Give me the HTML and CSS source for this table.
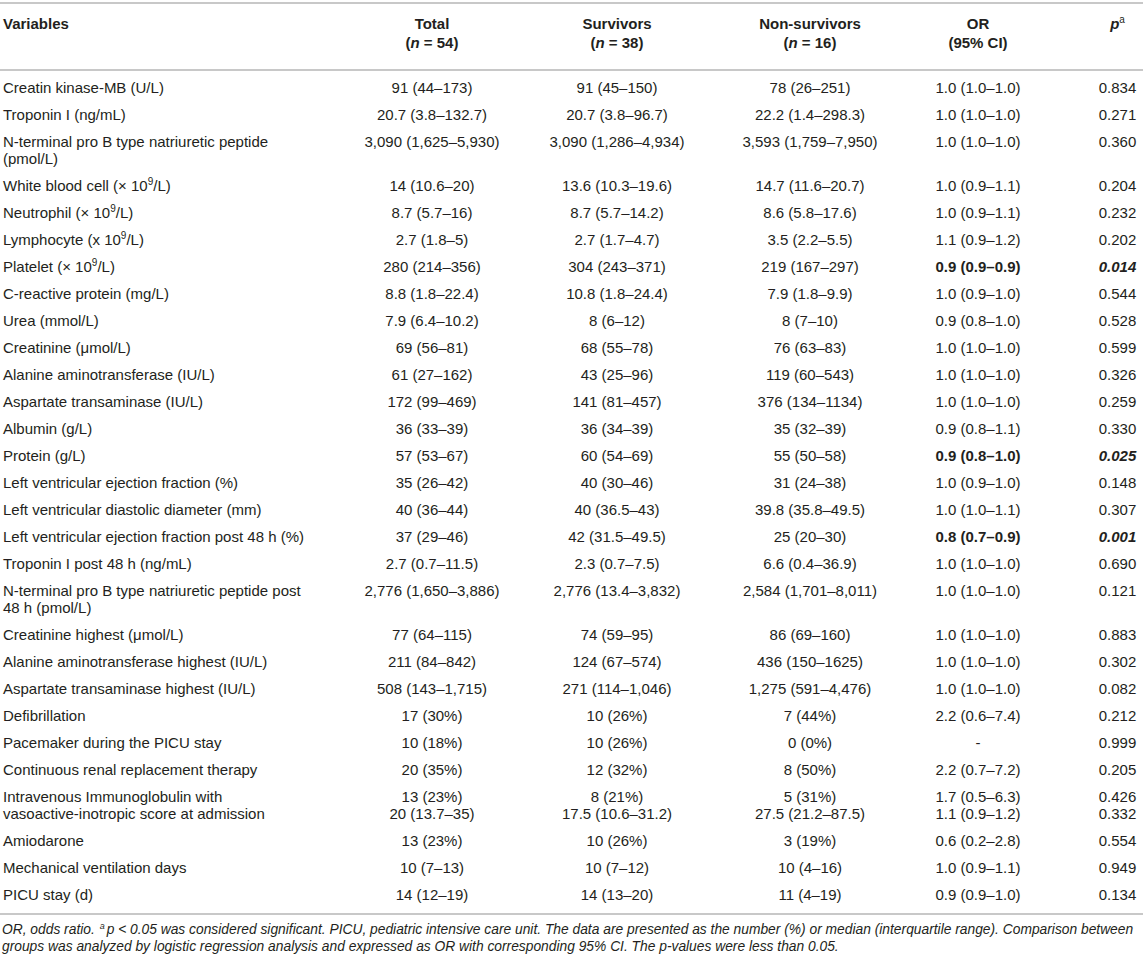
FILE: index.html
```html
<!DOCTYPE html>
<html lang="en">
<head>
    <meta charset="UTF-8">
    <meta name="viewport" content="width=device-width, initial-scale=1.0">
    <title>Laboratory and treatment variables</title>
    <link rel="stylesheet" href="styles.css">
</head>
<body>
<div class="table-wrap">
    <table class="data-table">
        <colgroup>
            <col class="col-var">
            <col class="col-total">
            <col class="col-surv">
            <col class="col-non">
            <col class="col-or">
            <col class="col-p">
        </colgroup>
        <thead>
            <tr>
                <th class="var">Variables</th>
                <th>Total<br>(<i>n</i> = 54)</th>
                <th>Survivors<br>(<i>n</i> = 38)</th>
                <th>Non-survivors<br>(<i>n</i> = 16)</th>
                <th>OR<br>(95% CI)</th>
                <th class="p"><i>p</i><sup>a</sup></th>
            </tr>
        </thead>
        <tbody>
            <tr><td class="var">Creatin kinase-MB (U/L)</td><td>91 (44–173)</td><td>91 (45–150)</td><td>78 (26–251)</td><td>1.0 (1.0–1.0)</td><td class="p">0.834</td></tr>
            <tr><td class="var">Troponin I (ng/mL)</td><td>20.7 (3.8–132.7)</td><td>20.7 (3.8–96.7)</td><td>22.2 (1.4–298.3)</td><td>1.0 (1.0–1.0)</td><td class="p">0.271</td></tr>
            <tr><td class="var">N-terminal pro B type natriuretic peptide (pmol/L)</td><td>3,090 (1,625–5,930)</td><td>3,090 (1,286–4,934)</td><td>3,593 (1,759–7,950)</td><td>1.0 (1.0–1.0)</td><td class="p">0.360</td></tr>
            <tr><td class="var">White blood cell (× 10<sup>9</sup>/L)</td><td>14 (10.6–20)</td><td>13.6 (10.3–19.6)</td><td>14.7 (11.6–20.7)</td><td>1.0 (0.9–1.1)</td><td class="p">0.204</td></tr>
            <tr><td class="var">Neutrophil (× 10<sup>9</sup>/L)</td><td>8.7 (5.7–16)</td><td>8.7 (5.7–14.2)</td><td>8.6 (5.8–17.6)</td><td>1.0 (0.9–1.1)</td><td class="p">0.232</td></tr>
            <tr><td class="var">Lymphocyte (x 10<sup>9</sup>/L)</td><td>2.7 (1.8–5)</td><td>2.7 (1.7–4.7)</td><td>3.5 (2.2–5.5)</td><td>1.1 (0.9–1.2)</td><td class="p">0.202</td></tr>
            <tr><td class="var">Platelet (× 10<sup>9</sup>/L)</td><td>280 (214–356)</td><td>304 (243–371)</td><td>219 (167–297)</td><td><b>0.9 (0.9–0.9)</b></td><td class="p"><b><i>0.014</i></b></td></tr>
            <tr><td class="var">C-reactive protein (mg/L)</td><td>8.8 (1.8–22.4)</td><td>10.8 (1.8–24.4)</td><td>7.9 (1.8–9.9)</td><td>1.0 (0.9–1.0)</td><td class="p">0.544</td></tr>
            <tr><td class="var">Urea (mmol/L)</td><td>7.9 (6.4–10.2)</td><td>8 (6–12)</td><td>8 (7–10)</td><td>0.9 (0.8–1.0)</td><td class="p">0.528</td></tr>
            <tr><td class="var">Creatinine (μmol/L)</td><td>69 (56–81)</td><td>68 (55–78)</td><td>76 (63–83)</td><td>1.0 (1.0–1.0)</td><td class="p">0.599</td></tr>
            <tr><td class="var">Alanine aminotransferase (IU/L)</td><td>61 (27–162)</td><td>43 (25–96)</td><td>119 (60–543)</td><td>1.0 (1.0–1.0)</td><td class="p">0.326</td></tr>
            <tr><td class="var">Aspartate transaminase (IU/L)</td><td>172 (99–469)</td><td>141 (81–457)</td><td>376 (134–1134)</td><td>1.0 (1.0–1.0)</td><td class="p">0.259</td></tr>
            <tr><td class="var">Albumin (g/L)</td><td>36 (33–39)</td><td>36 (34–39)</td><td>35 (32–39)</td><td>0.9 (0.8–1.1)</td><td class="p">0.330</td></tr>
            <tr><td class="var">Protein (g/L)</td><td>57 (53–67)</td><td>60 (54–69)</td><td>55 (50–58)</td><td><b>0.9 (0.8–1.0)</b></td><td class="p"><b><i>0.025</i></b></td></tr>
            <tr><td class="var">Left ventricular ejection fraction (%)</td><td>35 (26–42)</td><td>40 (30–46)</td><td>31 (24–38)</td><td>1.0 (0.9–1.0)</td><td class="p">0.148</td></tr>
            <tr><td class="var">Left ventricular diastolic diameter (mm)</td><td>40 (36–44)</td><td>40 (36.5–43)</td><td>39.8 (35.8–49.5)</td><td>1.0 (1.0–1.1)</td><td class="p">0.307</td></tr>
            <tr><td class="var">Left ventricular ejection fraction post 48 h (%)</td><td>37 (29–46)</td><td>42 (31.5–49.5)</td><td>25 (20–30)</td><td><b>0.8 (0.7–0.9)</b></td><td class="p"><b><i>0.001</i></b></td></tr>
            <tr><td class="var">Troponin I post 48 h (ng/mL)</td><td>2.7 (0.7–11.5)</td><td>2.3 (0.7–7.5)</td><td>6.6 (0.4–36.9)</td><td>1.0 (1.0–1.0)</td><td class="p">0.690</td></tr>
            <tr><td class="var">N-terminal pro B type natriuretic peptide post 48 h (pmol/L)</td><td>2,776 (1,650–3,886)</td><td>2,776 (13.4–3,832)</td><td>2,584 (1,701–8,011)</td><td>1.0 (1.0–1.0)</td><td class="p">0.121</td></tr>
            <tr><td class="var">Creatinine highest (μmol/L)</td><td>77 (64–115)</td><td>74 (59–95)</td><td>86 (69–160)</td><td>1.0 (1.0–1.0)</td><td class="p">0.883</td></tr>
            <tr><td class="var">Alanine aminotransferase highest (IU/L)</td><td>211 (84–842)</td><td>124 (67–574)</td><td>436 (150–1625)</td><td>1.0 (1.0–1.0)</td><td class="p">0.302</td></tr>
            <tr><td class="var">Aspartate transaminase highest (IU/L)</td><td>508 (143–1,715)</td><td>271 (114–1,046)</td><td>1,275 (591–4,476)</td><td>1.0 (1.0–1.0)</td><td class="p">0.082</td></tr>
            <tr><td class="var">Defibrillation</td><td>17 (30%)</td><td>10 (26%)</td><td>7 (44%)</td><td>2.2 (0.6–7.4)</td><td class="p">0.212</td></tr>
            <tr><td class="var">Pacemaker during the PICU stay</td><td>10 (18%)</td><td>10 (26%)</td><td>0 (0%)</td><td>-</td><td class="p">0.999</td></tr>
            <tr><td class="var">Continuous renal replacement therapy</td><td>20 (35%)</td><td>12 (32%)</td><td>8 (50%)</td><td>2.2 (0.7–7.2)</td><td class="p">0.205</td></tr>
            <tr><td class="var">Intravenous Immunoglobulin with<br>vasoactive-inotropic score at admission</td><td>13 (23%)<br>20 (13.7–35)</td><td>8 (21%)<br>17.5 (10.6–31.2)</td><td>5 (31%)<br>27.5 (21.2–87.5)</td><td>1.7 (0.5–6.3)<br>1.1 (0.9–1.2)</td><td class="p">0.426<br>0.332</td></tr>
            <tr><td class="var">Amiodarone</td><td>13 (23%)</td><td>10 (26%)</td><td>3 (19%)</td><td>0.6 (0.2–2.8)</td><td class="p">0.554</td></tr>
            <tr><td class="var">Mechanical ventilation days</td><td>10 (7–13)</td><td>10 (7–12)</td><td>10 (4–16)</td><td>1.0 (0.9–1.1)</td><td class="p">0.949</td></tr>
            <tr><td class="var">PICU stay (d)</td><td>14 (12–19)</td><td>14 (13–20)</td><td>11 (4–19)</td><td>0.9 (0.9–1.0)</td><td class="p">0.134</td></tr>
        </tbody>
    </table>
    <p class="table-note">OR, odds ratio. <sup>a</sup>p &lt; 0.05 was considered significant. PICU, pediatric intensive care unit. The data are presented as the number (%) or median (interquartile range). Comparison between groups was analyzed by logistic regression analysis and expressed as OR with corresponding 95% CI. The p-values were less than 0.05.</p>
</div>
</body>
</html>
```

FILE: styles.css
```css
/* Results table, journal style */
body {
    margin: 0;
    background-color: #fff;
    color: #231f20;
    font-family: "Liberation Sans", Arial, sans-serif;
}
.table-wrap {
    padding-top: 2px;
}
.data-table {
    width: 1143px;
    table-layout: fixed;
    border-collapse: collapse;
    font-size: 15px;
    line-height: 17px;
}
.col-var { width: 340px; }
.col-total { width: 184px; }
.col-surv { width: 186px; }
.col-non { width: 200px; }
.col-or { width: 136px; }
.col-p { width: 97px; }

.data-table thead tr {
    border-top: 2px solid #c8c8c8;
    border-bottom: 2px solid #c8c8c8;
}
.data-table th {
    font-weight: bold;
    text-align: center;
    vertical-align: top;
    line-height: 19px;
    padding: 10px 0 17px 0;
}
.data-table td {
    text-align: center;
    vertical-align: top;
    padding: 5px 0;
}
.data-table tbody tr:first-child td {
    padding-top: 8px;
}
.data-table tbody tr:last-child td {
    padding-bottom: 10px;
}
.data-table tbody tr:last-child {
    border-bottom: 2px solid #c8c8c8;
}
.data-table .var {
    text-align: left;
    padding-left: 3px;
    padding-right: 30px;
}
.data-table .p {
    padding-left: 46px;
}
.data-table sup {
    font-size: 10px;
    line-height: 0;
    vertical-align: 6px;
}
.data-table th sup {
    font-weight: normal;
}
.table-note {
    margin: 6px 0 0 0;
    padding: 0 2px;
    font-size: 13.8px;
    line-height: 17px;
    font-style: italic;
}
.table-note sup {
    font-size: 9px;
    line-height: 0;
    vertical-align: 5px;
    margin: 0 2px 0 1px;
}
```
